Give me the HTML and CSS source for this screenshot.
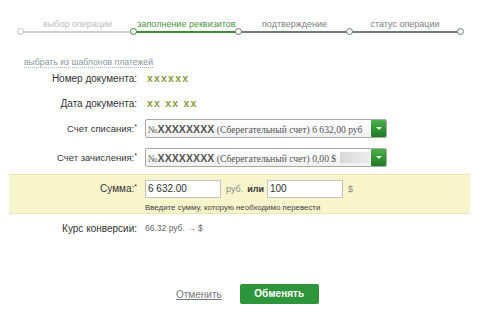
FILE: index.html
```html
<!DOCTYPE html>
<html lang="ru">
<head>
<meta charset="utf-8">
<link rel="stylesheet" href="styles.css">
</head>
<body>
<div class="page">
  <div class="steps">
    <div class="step done" style="width:113px"><div class="step-label">выбор операции</div><div class="step-line"></div></div>
    <div class="step current" style="width:105px"><div class="step-label">заполнение реквизитов</div><div class="step-line"></div></div>
    <div class="step next" style="width:111px"><div class="step-label">подтверждение</div><div class="step-line"></div></div>
    <div class="step next last" style="width:110px"><div class="step-label">статус операции</div><div class="step-line"></div></div>
  </div>

  <div class="templates"><a class="templates-link">выбрать из шаблонов платежей</a></div>

  <div class="row row-1"><div class="label">Номер документа:</div><div class="value code">xxxxxx</div></div>
  <div class="row row-2"><div class="label">Дата документа:</div><div class="value code">xx xx xx</div></div>
  <div class="row row-3"><div class="label">Счет списания:<sup>*</sup></div>
    <div class="value"><div class="select"><span class="sel-text"><span class="no">№</span><b class="acc">XXXXXXXX</b> (Сберегательный счет) 6 632,00 руб</span><span class="sel-btn"><span class="tri"></span></span></div></div></div>
  <div class="row row-4"><div class="label">Счет зачисления:<sup>*</sup></div>
    <div class="value"><div class="select"><span class="sel-text"><span class="no">№</span><b class="acc">XXXXXXXX</b> (Сберегательный счет) 0,00 $</span><span class="sel-fade"></span><span class="sel-btn"><span class="tri"></span></span></div></div></div>

  <div class="sum-band">
    <div class="row row-sum"><div class="label">Сумма:<sup>*</sup></div>
      <div class="value sum-inputs"><span class="input">6 632.00</span><span class="unit">руб.</span><b class="or">или</b><span class="input">100</span><span class="unit">$</span></div></div>
    <div class="row row-hint"><div class="label"></div><div class="value hint">Введите сумму, которую необходимо перевести</div></div>
  </div>

  <div class="row row-rate"><div class="label">Курс конверсии:</div><div class="value rate">66.32 руб. → $</div></div>

  <div class="actions"><a class="cancel">Отменить</a><span class="btn">Обменять</span></div>
</div>
</body>
</html>
```

FILE: styles.css
```css
html, body { margin: 0; padding: 0; background: #fff; }
body { font-family: "Liberation Sans", Arial, sans-serif; color: #333; width: 480px; height: 311px; overflow: hidden; }
.page { position: relative; }

.steps { display: flex; padding: 18px 0 0 21px; }
.step { display: flex; flex-direction: column; }
.step-label { font-size: 9px; line-height: 12px; height: 12px; text-align: center; white-space: nowrap; color: #888; }
.step-line { position: relative; height: 2px; margin-top: 1px; background: #6e7c7a; }
.step-line::before, .last .step-line::after {
  content: ""; position: absolute; top: -3px; width: 5px; height: 5px; border-radius: 50%;
  background: #fff; border: 1.5px solid #6e7c7a; box-sizing: content-box;
}
.step-line::before { left: -4px; }
.last .step-line::after { right: -4px; }
.done .step-label { color: #bdbdbd; }
.done .step-line { background: #cfcfcf; }
.done .step-line::before { border-color: #bdbdbd; }
.current .step-label { color: #4a9440; }
.current .step-line { background: #3f8a37; }
.current .step-line::before { border-color: #3f8a37; }
.next .step-label { color: #808080; }

.templates { padding: 21px 0 0 24px; height: 12px; line-height: 12px; }
.templates-link { font-size: 8.7px; color: #8a979c; border-bottom: 1px dotted #a9b4b8; }

.row { display: grid; grid-template-columns: 137px 1fr; column-gap: 8px; align-items: center; }
.label { text-align: right; font-size: 10px; color: #333; white-space: nowrap; }
.label sup { font-size: 7px; vertical-align: 3px; line-height: 0; }
.value { font-size: 10px; white-space: nowrap; }
.code { color: #8b9a3c; font-weight: bold; font-size: 10.5px; letter-spacing: 1.2px; padding-left: 2px; }
.row-1 { height: 24px; }
.row-2 { height: 26px; }
.row-3 { height: 25px; }
.row-4 { height: 33px; }
.row-3 .label, .row-4 .label { font-size: 9.5px; }

.select { display: flex; width: 242px; height: 19px; border: 1px solid #a8a8a8; border-radius: 2px; box-sizing: border-box;
  background: linear-gradient(#ffffff, #f1f1f1); align-items: center; overflow: hidden; }
.sel-text { font-family: "Liberation Serif", "Times New Roman", serif; font-size: 9.6px; color: #555; padding-left: 2px; white-space: nowrap; flex: none; }
.no { font-size: 10px; color: #666; }
.acc { font-family: "Liberation Sans", Arial, sans-serif; font-size: 10.5px; color: #555; letter-spacing: 0.1px; }
.sel-fade { flex: 1; height: 11px; margin: 0 1px 0 4px; background: linear-gradient(90deg, #d8d8d8, #ececec); }
.sel-btn { margin-left: auto; width: 15px; height: 17px; flex: none; border-radius: 1px;
  background: linear-gradient(#4db04a, #1f7a25); display: flex; align-items: center; justify-content: center; }
.tri { width: 0; height: 0; border-left: 3px solid transparent; border-right: 3px solid transparent; border-top: 3px solid #e6f5e2; }

.sum-band { margin: 0 10px 0 9px; height: 38px; background: #f8f5cd; border-top: 1px solid #ebe6ac; border-bottom: 1px solid #ebe6ac; }
.sum-band .row { grid-template-columns: 128px 1fr; }
.row-sum { height: 25px; padding-top: 1px; }
.row-hint { height: 12px; }
.sum-inputs { display: flex; align-items: center; }
.input { display: block; width: 76px; height: 18px; box-sizing: border-box; border: 1px solid #c2c2c2; background: #fff;
  font-size: 10px; line-height: 16px; padding-left: 2px; color: #333; }
.unit { color: #888; font-size: 9px; margin: 0 4px 0 5px; }
.or { font-size: 9px; color: #333; margin-right: 3px; }
.hint { font-size: 7.9px; color: #444; }

.row-rate { height: 24px; margin-top: 2px; }
.rate { font-size: 8.5px; color: #666; }

.actions { display: flex; align-items: center; padding: 44px 0 0 176px; gap: 18px; }
.cancel { font-size: 10px; color: #777; text-decoration: underline; }
.btn { display: block; width: 79px; height: 20px; line-height: 20px; text-align: center; border-radius: 2px;
  background: #2e963a; color: #fff; font-weight: bold; font-size: 10px; }
```
